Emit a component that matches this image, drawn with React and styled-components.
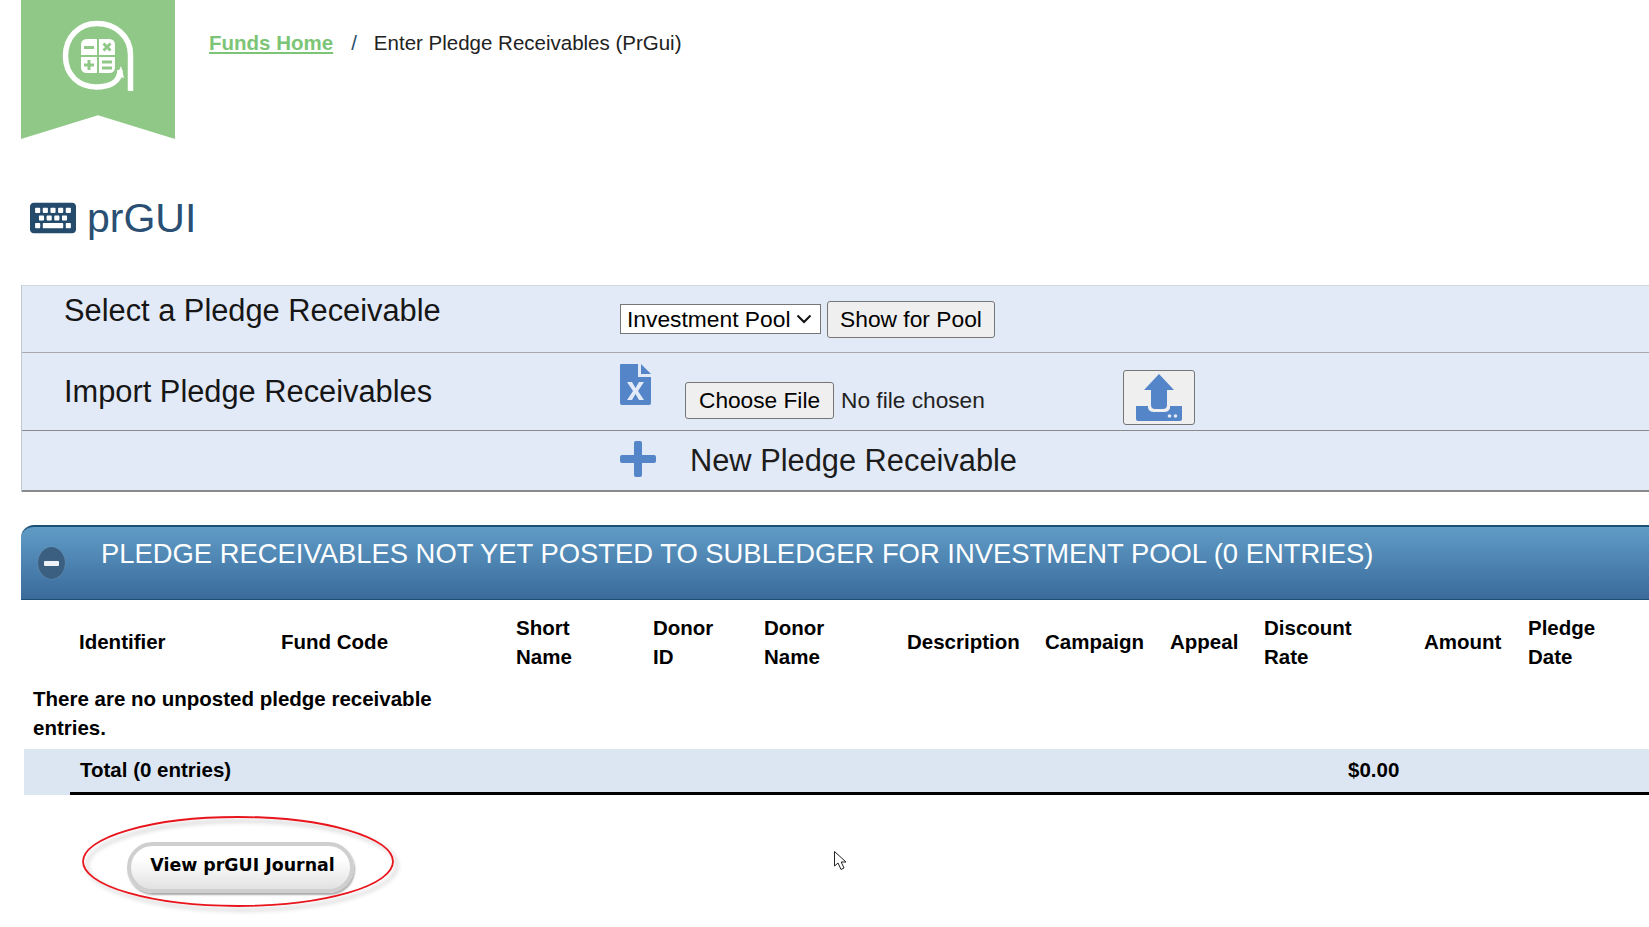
import styled, { createGlobalStyle } from 'styled-components'
import { FaKeyboard } from 'react-icons/fa'

const chevron = `url("data:image/svg+xml,%3Csvg xmlns='http://www.w3.org/2000/svg' width='16' height='10' viewBox='0 0 16 10'%3E%3Cpath d='M1.500 1.500 L8 8 L14.500 1.500' fill='none' stroke='%23111' stroke-width='2'/%3E%3C/svg%3E")`

const GlobalStyle = createGlobalStyle`
  html, body {
    margin: 0;
    padding: 0;
    background: #fff;
    overflow: hidden;
  }
  body {
    font-family: "Liberation Sans", Arial, sans-serif;
    color: #000;
  }
`

const Page = styled.div`
  position: relative;
  width: 1649px;
  height: 927px;
  padding-left: 21px;
  box-sizing: border-box;
  overflow: hidden;
`

const TopBar = styled.div`
  display: flex;
  height: 139px;
`

const Ribbon = styled.div`
  width: 154px;
  height: 139px;
  background: #90c987;
  clip-path: polygon(0 0, 100% 0, 100% 100%, 50% 83%, 0 100%);
`

const Crumbs = styled.div`
  margin: 29px 0 0 34px;
  font-size: 20.5px;
  line-height: 28px;
  color: #222;
`

const CrumbLink = styled.a`
  color: #7cc576;
  font-weight: 700;
  text-decoration: underline;
`

const CrumbSep = styled.span`
  margin: 0 17px 0 18px;
  color: #2a4d6e;
`

const Title = styled.h1`
  display: flex;
  align-items: center;
  gap: 11px;
  height: 44px;
  margin: 57px 0 45px 9px;
  font-size: 41px;
  font-weight: 400;
  color: #2a4f72;
`

const Panel = styled.div`
  border-top: 1px solid #d2d6de;
  border-left: 1px solid #c4c8d0;
  background: #e3eaf7;
`

const PanelRow = styled.div`
  display: grid;
  grid-template-columns: 598px 1fr;
  height: ${props => props.h}px;
  box-sizing: border-box;
  border-bottom: ${props => props.line};
`

const RowLabel = styled.div`
  padding: ${props => props.top}px 0 0 42px;
  font-size: 30.8px;
  line-height: 36px;
  color: #161616;
`

const Controls = styled.div`
  display: flex;
  align-items: flex-start;
`

const PoolSelect = styled.select`
  appearance: none;
  width: 201px;
  height: 30px;
  margin-top: 18px;
  box-sizing: border-box;
  padding: 0 0 1px 6px;
  border: 1px solid #767676;
  border-radius: 0;
  background: #fff ${chevron} no-repeat right 8px center;
  font-family: inherit;
  font-size: 22.8px;
  color: #000;
`

const PlainButton = styled.button`
  height: 37px;
  margin: 15px 0 0 6px;
  padding: 0 12px;
  box-sizing: border-box;
  border: 1px solid #767676;
  border-radius: 3px;
  background: #efefef;
  font-family: inherit;
  font-size: 22.8px;
  color: #000;
`

const ExcelSlot = styled.div`
  margin-top: 11px;
`

const FileInput = styled.input`
  width: 430px;
  margin: 29px 0 0 34px;
  font-family: inherit;
  font-size: 22.7px;
  color: #222;

  &::file-selector-button {
    height: 37px;
    margin-right: 7px;
    padding: 0 13px;
    border: 1px solid #767676;
    border-radius: 3px;
    background: #efefef;
    font-family: inherit;
    font-size: 22.7px;
    color: #000;
  }
`

const UploadButton = styled.button`
  display: flex;
  align-items: flex-start;
  justify-content: center;
  width: 72px;
  height: 55px;
  margin: 17px 0 0 8px;
  padding: 3px 0 0;
  box-sizing: border-box;
  border: 1px solid #767676;
  border-radius: 3px;
  background: #efefef;
`

const NewEntry = styled.div`
  display: flex;
  align-items: center;
  gap: 34px;
  height: 100%;
  font-size: 30.8px;
  color: #1c1c1c;

  svg {
    margin-bottom: 4px;
  }
`

const SectionBar = styled.div`
  display: flex;
  align-items: flex-start;
  height: 75px;
  margin-top: 33px;
  box-sizing: border-box;
  padding-left: 17px;
  border-top: 2px solid #1c4f74;
  border-bottom: 1px solid #1c4f74;
  border-radius: 13px 0 0 0;
  background: linear-gradient(#609cc6, #3a6a9b);
`

const Collapse = styled.span`
  display: flex;
  align-items: center;
  justify-content: center;
  width: 27px;
  height: 32px;
  margin-top: 20px;
  border-radius: 50%;
  background: #3a5f80;
  box-shadow: 0 0 1px #8aa5bd;
`

const CollapseBar = styled.span`
  width: 15px;
  height: 5px;
  border-radius: 1px;
  background: #eef2f6;
`

const SectionTitle = styled.div`
  margin: 10px 0 0 36px;
  font-size: 27.4px;
  line-height: 34px;
  color: #fff;
  white-space: nowrap;
`

const ColumnRow = styled.div`
  display: grid;
  grid-template-columns: 202px 235px 137px 111px 143px 138px 125px 94px 160px 104px 1fr;
  align-items: center;
  height: 83px;
  padding-left: 58px;
  font-size: 20.5px;
  font-weight: 700;
  line-height: 29px;
`

const EmptyNote = styled.div`
  width: 430px;
  height: 65px;
  margin-top: 1px;
  padding-left: 12px;
  font-size: 20.5px;
  font-weight: 700;
  line-height: 29px;
`

const TotalRow = styled.div`
  margin-left: 3px;
  padding-left: 46px;
  background: #dce6f2;
`

const TotalInner = styled.div`
  display: grid;
  grid-template-columns: 1268px 1fr;
  align-items: center;
  height: 46px;
  box-sizing: border-box;
  padding: 0 0 2px 10px;
  border-bottom: 3px solid #000;
  font-size: 20.5px;
  font-weight: 700;
`

const JournalWrap = styled.div`
  position: relative;
  width: 227px;
  height: 51px;
  margin: 47px 0 0 106px;
`

const JournalButton = styled.button`
  width: 100%;
  height: 100%;
  padding: 0 0 5px 4px;
  box-sizing: border-box;
  border: 4px solid #cfcfcf;
  border-radius: 26px;
  background: linear-gradient(#fff 30%, #e2e2e2);
  box-shadow: 1px 2px 2px #aaa;
  font-family: "DejaVu Sans", sans-serif;
  font-size: 17.4px;
  font-weight: 700;
  color: #000;
`

const Ellipse = styled.svg`
  position: absolute;
  left: -48px;
  top: -28px;
  pointer-events: none;
`

const Pointer = styled.svg`
  position: absolute;
  left: 833px;
  top: 850px;
`

function Logo() {
  return (
    <svg width="154" height="139" viewBox="21 0 154 139" fill="none">
      <path
        d="M130.500 91 V55 C130.500 36 115 23.500 97 23.500 C79 23.500 65.500 37 65.500 56 C65.500 75 79 87 96 87 C110 87 120 82 120 70"
        stroke="#fff"
        strokeWidth="5.500"
      />
      <path d="M116.500 76 L121 66 L124 78 Z" fill="#fff" />
      <path d="M97 39 V55 H81 V45 Q81 39 87 39 Z" fill="#fff" />
      <path d="M99 39 H109 Q115 39 115 45 V55 H99 Z" fill="#fff" />
      <path d="M81 57 H97 V73 H87 Q81 73 81 67 Z" fill="#fff" />
      <path d="M99 57 H115 V67 Q115 73 109 73 H99 Z" fill="#fff" />
      <path
        d="M84 47.500 H94 M103.500 43.500 L110.500 50.500 M110.500 43.500 L103.500 50.500 M84 65 H94 M89 60 V70 M102 62 H112 M102 68 H112"
        stroke="#90c987"
        strokeWidth="3"
      />
    </svg>
  )
}

function ExcelIcon() {
  return (
    <svg width="31" height="41" viewBox="0 0 31 41">
      <path d="M1 0 H18 V13 H31 V39 Q31 41 29 41 H2 Q0 41 0 39 V1 Q0 0 1 0 Z" fill="#5585c9" />
      <path d="M21 0 L31 10 H21 Z" fill="#5585c9" />
      <path d="M7 18 H12 L15.500 24 L19 18 H24 L18 27 L24 36 H19 L15.500 30 L12 36 H7 L13 27 Z" fill="#e3eaf7" />
    </svg>
  )
}

function UploadIcon() {
  return (
    <svg width="46" height="47" viewBox="0 0 46 47">
      <path d="M23 0 L38 16 H31 V31 Q31 35 27 35 H19 Q15 35 15 31 V16 H8 Z" fill="#5585c9" />
      <path d="M0 32 H12 V34 Q13 38 18 38 H28 Q33 38 34 34 V32 H46 V45 Q46 47 44 47 H2 Q0 47 0 45 Z" fill="#5585c9" />
      <circle cx="33.500" cy="42" r="1.800" fill="#e3eaf7" />
      <circle cx="39.500" cy="42" r="1.800" fill="#e3eaf7" />
    </svg>
  )
}

function PlusIcon() {
  return (
    <svg width="36" height="36" viewBox="0 0 36 36">
      <rect x="14" y="0" width="8" height="36" rx="2" fill="#5585c9" />
      <rect x="0" y="14" width="36" height="8" rx="2" fill="#5585c9" />
    </svg>
  )
}

export default function App() {
  return (
    <Page>
      <GlobalStyle />
      <TopBar>
        <Ribbon>
          <Logo />
        </Ribbon>
        <Crumbs>
          <CrumbLink>Funds Home</CrumbLink>
          <CrumbSep>/</CrumbSep>
          Enter Pledge Receivables (PrGui)
        </Crumbs>
      </TopBar>

      <Title>
        <FaKeyboard size={46} color="#244a6c" />
        prGUI
      </Title>

      <Panel>
        <PanelRow h={67} line="1px solid #a9a9a9">
          <RowLabel top={7}>Select a Pledge Receivable</RowLabel>
          <Controls>
            <PoolSelect defaultValue="Investment Pool">
              <option>Investment Pool</option>
            </PoolSelect>
            <PlainButton>Show for Pool</PlainButton>
          </Controls>
        </PanelRow>
        <PanelRow h={78} line="1px solid #8a8a8a">
          <RowLabel top={21}>Import Pledge Receivables</RowLabel>
          <Controls>
            <ExcelSlot>
              <ExcelIcon />
            </ExcelSlot>
            <FileInput type="file" />
            <UploadButton>
              <UploadIcon />
            </UploadButton>
          </Controls>
        </PanelRow>
        <PanelRow h={61} line="2px solid #8a8a8a">
          <div />
          <NewEntry>
            <PlusIcon />
            New Pledge Receivable
          </NewEntry>
        </PanelRow>
      </Panel>

      <SectionBar>
        <Collapse>
          <CollapseBar />
        </Collapse>
        <SectionTitle>PLEDGE RECEIVABLES NOT YET POSTED TO SUBLEDGER FOR INVESTMENT POOL (0 ENTRIES)</SectionTitle>
      </SectionBar>

      <ColumnRow>
        <span>Identifier</span>
        <span>Fund Code</span>
        <span>Short<br />Name</span>
        <span>Donor<br />ID</span>
        <span>Donor<br />Name</span>
        <span>Description</span>
        <span>Campaign</span>
        <span>Appeal</span>
        <span>Discount<br />Rate</span>
        <span>Amount</span>
        <span>Pledge<br />Date</span>
      </ColumnRow>

      <EmptyNote>There are no unposted pledge receivable entries.</EmptyNote>

      <TotalRow>
        <TotalInner>
          <span>Total (0 entries)</span>
          <span>$0.00</span>
        </TotalInner>
      </TotalRow>

      <JournalWrap>
        <JournalButton>View prGUI Journal</JournalButton>
        <Ellipse width="330" height="108" viewBox="0 0 330 108">
          <defs>
            <filter id="annotationShadow" x="-5%" y="-5%" width="115%" height="125%">
              <feDropShadow dx="4" dy="4" stdDeviation="2" floodColor="#000" floodOpacity="0.25" />
            </filter>
          </defs>
          <ellipse cx="159" cy="47.500" rx="155" ry="44.500" fill="none" stroke="#e8141c" strokeWidth="1.800" filter="url(#annotationShadow)" />
        </Ellipse>
      </JournalWrap>

      <Pointer width="16" height="22" viewBox="0 0 16 22">
        <path d="M1.500 1.500 V16 L5 13 L8 19.500 L11 18 L8.200 12 H13 Z" fill="#fff" stroke="#222" strokeWidth="1" />
      </Pointer>
    </Page>
  )
}
